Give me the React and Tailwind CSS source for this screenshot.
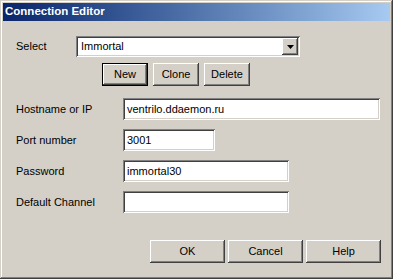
const raised =
  'shadow-[inset_-1px_-1px_#404040,inset_1px_1px_#ffffff,inset_-2px_-2px_#808080,inset_2px_2px_#d4d0c8]';
const sunken =
  'shadow-[inset_1px_1px_#808080,inset_-1px_-1px_#ffffff,inset_2px_2px_#404040,inset_-2px_-2px_#d4d0c8]';

const Button = ({ children, isDefault, className = '' }) => (
  <button
    className={`h-[23px] bg-[#d4d0c8] text-[11px] text-black flex items-center justify-center ${
      isDefault ? 'border border-black' : ''
    } ${className}`}
  >
    <span className={`w-full h-full flex items-center justify-center ${raised}`}>{children}</span>
  </button>
);

const Field = ({ label, value, width }) => (
  <div className="flex items-center">
    <span className="w-[107px] text-[11px] text-black">{label}</span>
    <div className={`h-[22px] bg-white flex items-center px-[4px] text-[11px] text-black ${sunken} ${width}`}>
      {value}
    </div>
  </div>
);

const App = () => {
  return (
    <div
      className={`w-[393px] h-[279px] bg-[#d4d0c8] p-[3px] flex flex-col font-['Liberation_Sans',Arial,sans-serif] shadow-[inset_-1px_-1px_#404040,inset_1px_1px_#d4d0c8,inset_-2px_-2px_#808080,inset_2px_2px_#ffffff]`}
    >
      {/* title bar */}
      <div className="h-[18px] bg-gradient-to-r from-[#0a246a] to-[#a6caf0] flex items-center pl-[2px]">
        <span className="text-white font-bold text-[11.5px]">Connection Editor</span>
      </div>

      <div className="pl-[13px] pr-[9px] flex flex-col">
        {/* select row */}
        <div className="flex items-center mt-[15px]">
          <span className="w-[60px] text-[11px] text-black">Select</span>
          <div className={`w-[224px] h-[21px] bg-white flex items-center p-[2px] ${sunken}`}>
            <span className="flex-1 pl-[3px] text-[11px] text-black">Immortal</span>
            <div className={`w-[16px] h-[17px] bg-[#d4d0c8] flex items-center justify-center ${raised}`}>
              <svg width="7" height="4" viewBox="0 0 7 4">
                <path d="M0 0h7L3.5 4z" fill="#000" />
              </svg>
            </div>
          </div>
        </div>

        {/* new / clone / delete */}
        <div className="flex gap-[5px] mt-[6px] pl-[86px]">
          <Button isDefault className="w-[46px]">New</Button>
          <Button className="w-[46px]">Clone</Button>
          <Button className="w-[46px]">Delete</Button>
        </div>

        <div className="flex flex-col mt-[12px] gap-[9px]">
          <Field label="Hostname or IP" value="ventrilo.ddaemon.ru" width="w-[257px]" />
          <Field label="Port number" value="3001" width="w-[92px]" />
          <Field label="Password" value="immortal30" width="w-[166px]" />
          <Field label="Default Channel" value="" width="w-[166px]" />
        </div>

        {/* bottom buttons */}
        <div className="flex justify-end gap-[3px] mt-[27px]">
          <Button className="w-[75px]">OK</Button>
          <Button className="w-[75px]">Cancel</Button>
          <Button className="w-[75px]">Help</Button>
        </div>
      </div>
    </div>
  );
};

export default App;
